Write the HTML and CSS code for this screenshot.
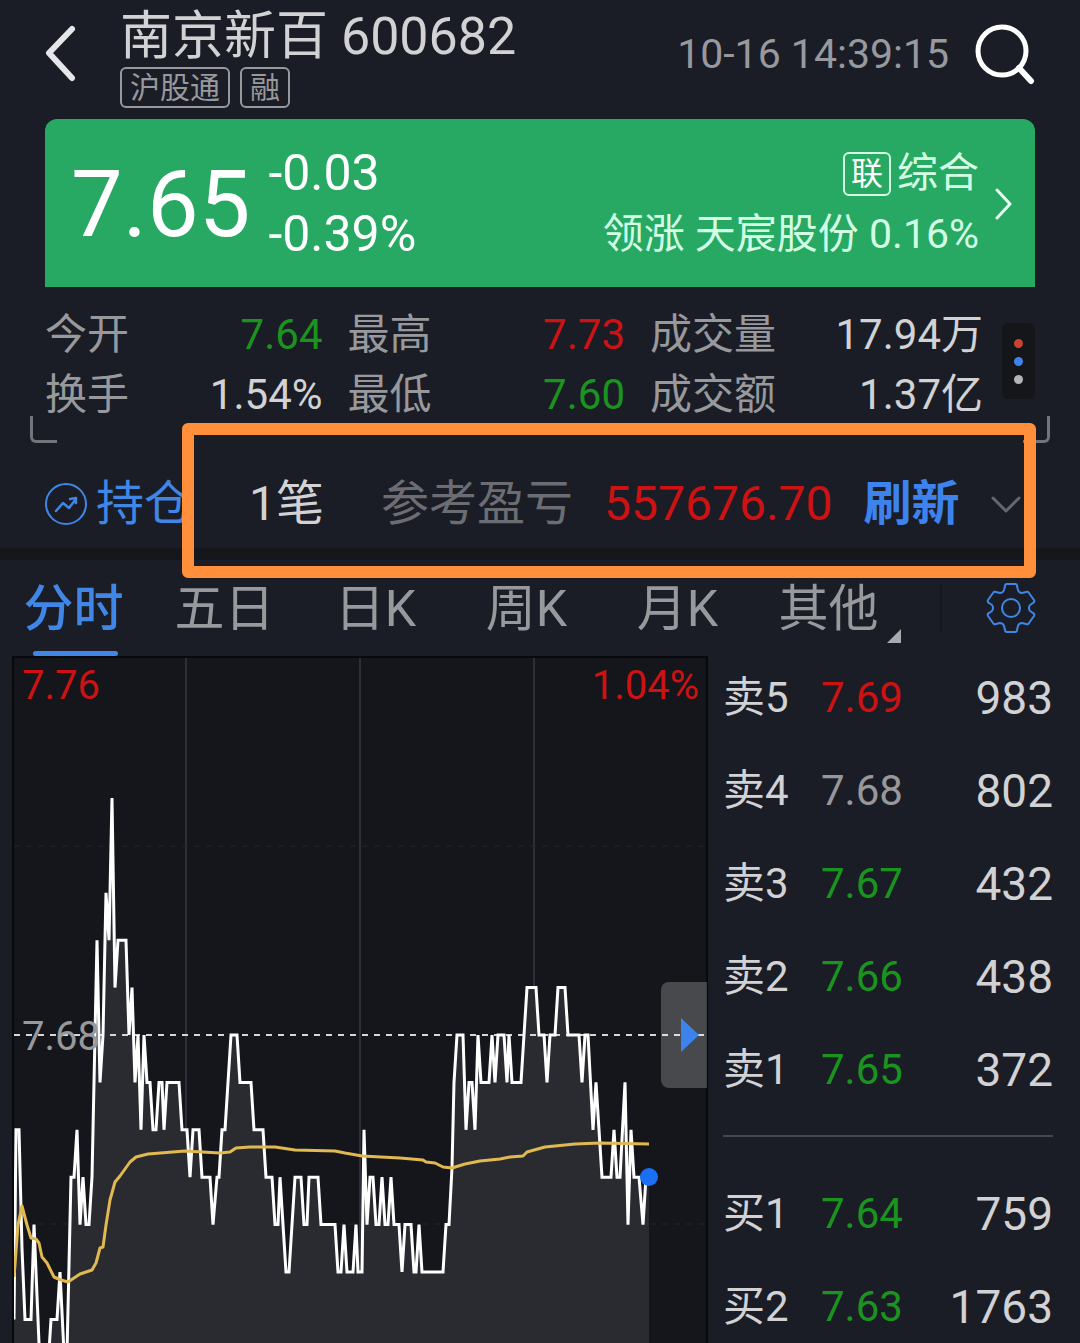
FILE: index.html
```html
<!DOCTYPE html>
<html lang="zh-CN">
<head>
  <meta charset="UTF-8" />
  <meta name="viewport" content="width=device-width, initial-scale=1.0"/>
  <title>南京新百 600682</title>
  <link rel="stylesheet" href="styles.css">
</head>
<body>
  <header class="topbar">
    <button class="icon-btn back" type="button" aria-label="返回">
      <svg width="32" height="60" viewBox="0 0 32 60"><path d="M27 5 4 29 27 54" fill="none" stroke="#e6e6ea" stroke-width="6" stroke-linecap="round" stroke-linejoin="round"/></svg>
    </button>
    <div class="stock">
      <h1>南京新百 <span>600682</span></h1>
      <div class="tags"><span class="tag">沪股通</span><span class="tag">融</span></div>
    </div>
    <time class="clock">10-16 14:39:15</time>
    <button class="icon-btn" type="button" aria-label="搜索">
      <svg width="60" height="62" viewBox="0 0 60 62" fill="none" stroke="#fff" stroke-linecap="round"><circle cx="27" cy="28" r="24" stroke-width="5"/><path d="M44 45 56 58" stroke-width="6"/></svg>
    </button>
  </header>

  <section class="quote">
    <strong class="price">7.65</strong>
    <div class="change">
      <span>-0.03</span>
      <span>-0.39%</span>
    </div>
    <a class="sector" href="#sector">
      <span class="sector-text">
        <span class="sector-name"><b>联</b>综合</span>
        <span>领涨 天宸股份 0.16%</span>
      </span>
      <svg width="18" height="32" viewBox="0 0 18 32"><path d="M2 2 15 16 2 30" fill="none" stroke="#e9fff2" stroke-width="3" stroke-linecap="round" stroke-linejoin="round"/></svg>
    </a>
  </section>

  <section class="stats">
    <dl class="stats-grid">
      <div><dt>今开</dt><dd class="down">7.64</dd></div>
      <div><dt>最高</dt><dd class="up">7.73</dd></div>
      <div><dt>成交量</dt><dd>17.94万</dd></div>
      <div><dt>换手</dt><dd>1.54%</dd></div>
      <div><dt>最低</dt><dd class="down">7.60</dd></div>
      <div><dt>成交额</dt><dd>1.37亿</dd></div>
    </dl>
    <button class="more" type="button" aria-label="更多"><i class="dot-red"></i><i class="dot-blue"></i><i class="dot-gray"></i></button>
    <span class="corner corner-left"></span>
    <span class="corner corner-right"></span>
  </section>

  <section class="holding">
    <a class="holding-link" href="#holding">
      <svg width="42" height="42" viewBox="0 0 42 42" fill="none" stroke="#3f86e6" stroke-width="2" stroke-linecap="round" stroke-linejoin="round"><circle cx="21" cy="21" r="20"/><path d="M11 28 18 20 24 25 31 16M25 16 31 15 31 20" stroke-width="2.5"/></svg>
      持仓
    </a>
    <span class="count">1笔</span>
    <div class="profit">
      <span class="profit-label">参考盈亏</span>
      <span class="up">557676.70</span>
      <button class="refresh" type="button">刷新</button>
      <button class="icon-btn" type="button" aria-label="展开">
        <svg width="30" height="18" viewBox="0 0 30 18"><path d="M2 3 15 16 28 3" fill="none" stroke="#66676d" stroke-width="3" stroke-linecap="round" stroke-linejoin="round"/></svg>
      </button>
    </div>
    <span class="highlight"></span>
  </section>

  <nav class="tabs">
    <div class="tab-list">
      <a class="active" href="#time">分时</a>
      <a href="#5d">五日</a>
      <a href="#day">日K</a>
      <a href="#week">周K</a>
      <a href="#month">月K</a>
      <a class="others" href="#others">其他</a>
    </div>
    <div class="tab-tools">
      <button class="icon-btn" type="button" aria-label="设置">
        <svg width="50" height="50" viewBox="-25 -25 50 50" fill="none" stroke="#3f86e6" stroke-width="2" stroke-linejoin="round"><path d="M-4-24H4Q6-24 6-22L7-18Q8-15 11-15L15-16Q17-17 18-15L23-8Q24-6 22-5L19-3Q17 0 19 3L22 5Q24 6 23 8L18 15Q17 17 15 16L11 15Q8 15 7 18L6 22Q6 24 4 24H-4Q-6 24-6 22L-7 18Q-8 15-11 15L-15 16Q-17 17-18 15L-23 8Q-24 6-22 5L-19 3Q-17 0-19-3L-22-5Q-24-6-23-8L-18-15Q-17-17-15-16L-11-15Q-8-15-7-18L-6-22Q-6-24-4-24Z"/><circle r="9"/></svg>
      </button>
    </div>
  </nav>

  <main class="market">
    <div class="chart">
      <svg viewBox="12 656 696 687">
        <rect x="12" y="656" width="696" height="687" fill="#15161b"/>
        <path d="M186 658V1343M360 658V1343M534 658V1343" stroke="#2d2e37" stroke-width="2"/>
        <path d="M14 846H704M14 1224H704" stroke="#232429" stroke-dasharray="6 6"/>
        <path id="area" fill="#2a2b30"/>
        <path d="M14 1035H704" stroke="#d4d5d8" stroke-width="2" stroke-dasharray="6 6"/>
        <path id="line" fill="none" stroke="#fff" stroke-width="3"/>
        <path id="avg" fill="none" stroke="#e0b951" stroke-width="3" stroke-linejoin="round"/>
        <circle cx="649" cy="1177" r="9" fill="#1a70f5"/>
        <path d="M13 1343V657H707V1343" fill="none" stroke="#08090c" stroke-width="2"/>
      </svg>
      <span class="axis axis-high up">7.76</span>
      <span class="axis axis-percent up">1.04%</span>
      <span class="axis axis-base">7.68</span>
      <button class="drawer" type="button" aria-label="展开盘口"><svg width="18" height="34" viewBox="0 0 18 34"><path d="M0 0 18 17 0 34Z" fill="#3d83ee"/></svg></button>
    </div>

    <div class="book">
      <table class="sell">
        <tr><th>卖5</th><td class="up">7.69</td><td>983</td></tr>
        <tr><th>卖4</th><td class="flat">7.68</td><td>802</td></tr>
        <tr><th>卖3</th><td class="down">7.67</td><td>432</td></tr>
        <tr><th>卖2</th><td class="down">7.66</td><td>438</td></tr>
        <tr><th>卖1</th><td class="down">7.65</td><td>372</td></tr>
      </table>
      <table class="buy">
        <tr><th>买1</th><td class="down">7.64</td><td>759</td></tr>
        <tr><th>买2</th><td class="down">7.63</td><td>1763</td></tr>
      </table>
    </div>
  </main>

  <script src="chart.js"></script>
</body>
</html>
```

FILE: chart.js
```js
// [x, price in cents]
const prices = [
  [14, 762], [16, 766], [19, 766], [22, 763.5], [25, 762], [31, 762], [34, 764], [40, 761],
  [48, 761], [51, 762], [57, 762], [60, 763], [64, 761.3], [67, 761.3], [71, 765], [74, 765],
  [77, 766], [80, 764], [83, 765], [86, 764], [89, 764], [92, 765], [95, 768], [97, 770],
  [100, 767], [103, 768], [106, 771], [109, 770], [112, 773], [115, 769], [118, 770], [126, 770],
  [129, 768], [132, 769], [135, 767], [138, 768], [141, 766], [144, 768], [147, 767], [150, 767],
  [153, 766], [156, 766], [159, 767], [162, 767], [164, 766], [167, 767], [179, 767], [182, 766],
  [187, 766], [190, 765], [193, 766], [199, 766], [202, 765], [210, 765], [213, 764], [217, 765],
  [219, 765], [222, 766], [225, 766], [231, 768], [237, 768], [240, 767], [251, 767], [254, 766],
  [263, 766], [266, 765], [272, 765], [275, 764], [278, 764], [280, 765], [286, 763], [289, 763],
  [295, 765], [301, 765], [304, 764], [307, 764], [309, 765], [318, 765], [321, 764], [335, 764],
  [338, 763], [341, 763], [344, 764], [347, 763], [353, 763], [356, 764], [358, 763], [362, 763],
  [364, 766], [367, 764], [370, 765], [373, 765], [376, 764], [379, 764], [382, 765], [385, 764],
  [388, 764], [391, 765], [394, 764], [399, 764], [402, 763], [405, 764], [411, 764], [414, 763],
  [416, 763], [419, 764], [422, 763], [443, 763], [446, 764], [449, 764], [452, 765.2], [454, 767],
  [457, 768], [463, 768], [466, 766], [469, 767], [472, 767], [475, 766], [478, 768], [481, 767],
  [489, 767], [492, 768], [495, 767], [498, 768], [504, 768], [507, 767], [509, 768], [512, 767],
  [521, 767], [524, 768], [527, 769], [536, 769], [539, 768], [544, 768], [547, 767], [550, 768],
  [555, 768], [558, 769], [565, 769], [568, 768], [579, 768], [582, 767], [585, 768], [588, 768],
  [593, 766], [596, 767], [602, 765], [611, 765], [614, 766], [617, 765], [620, 765], [625, 767],
  [628, 764], [631, 766], [634, 765], [639, 765], [643, 764], [646, 765], [649, 765]
];

const average = [
  [14, 1277], [18, 1225], [22, 1206], [27, 1225], [31, 1238], [36, 1239], [39, 1243], [42, 1257],
  [47, 1263], [54, 1277], [61, 1280], [68, 1282], [74, 1278], [80, 1274], [92, 1270], [96, 1263],
  [100, 1248], [103, 1247], [106, 1225], [110, 1200], [115, 1182], [120, 1176], [130, 1162],
  [136, 1157], [148, 1154], [185, 1151], [220, 1153], [230, 1152], [236, 1148], [250, 1147],
  [275, 1147], [295, 1150], [335, 1151], [345, 1153], [362, 1156], [400, 1158], [423, 1160],
  [426, 1162], [435, 1163], [443, 1167], [452, 1168], [465, 1164], [480, 1161], [500, 1159],
  [510, 1157], [523, 1156], [527, 1152], [545, 1147], [575, 1144], [600, 1143], [649, 1144]
];

const toY = (p) => 1035 + (768 - p) * 47.4;
const points = prices.map(([x, p]) => `${x} ${toY(p)}`).join("L");

document.getElementById("line").setAttribute("d", "M" + points);
document.getElementById("area").setAttribute("d", "M14 1343L" + points + "V1343Z");
document.getElementById("avg").setAttribute("d", "M" + average.map((p) => p.join(" ")).join("L"));
```

FILE: styles.css
```css
* {
  box-sizing: border-box;
}

body {
  margin: 0;
  background-color: #1b1d26;
  color: #d2d2d4;
  font-family: Roboto, "Noto Sans CJK SC", sans-serif;
  font-size: 42px;
}

h1, dl, dd {
  margin: 0;
}

a {
  color: inherit;
  text-decoration: none;
}

button {
  padding: 0;
  border: none;
  background: none;
  color: inherit;
  font: inherit;
  cursor: pointer;
}

svg {
  display: block;
}

.up {
  color: #cc1212;
}

.down {
  color: #1a941f;
}

.flat {
  color: #98989c;
}

/* header */
.topbar {
  display: flex;
  align-items: center;
  padding: 0 45px 11px;
}

.back {
  margin-right: 43px;
}

.stock {
  flex: 1;
  padding-top: 11px;
}

.stock h1 {
  font-size: 52px;
  font-weight: 400;
  line-height: 52px;
  white-space: nowrap;
}

.tags {
  display: flex;
  gap: 10px;
  margin-top: 4px;
}

.tag {
  padding: 1px 8px 0;
  border: 2px solid #98999d;
  border-radius: 6px;
  color: #98999d;
  font-size: 30px;
  line-height: 36px;
}

.clock {
  margin-right: 26px;
  color: #98999d;
  font-size: 41px;
}

/* price card */
.quote {
  display: flex;
  align-items: center;
  height: 168px;
  margin: 0 45px;
  padding: 2px 22px 0 26px;
  border-radius: 12px 12px 0 0;
  background-color: #27a963;
  color: #fff;
}

.price {
  font-size: 92px;
  font-weight: 400;
}

.change {
  display: flex;
  flex-direction: column;
  margin-left: 18px;
  font-size: 50px;
  line-height: 61px;
}

.sector {
  display: flex;
  align-items: center;
  gap: 16px;
  margin-left: auto;
  color: #d3ffe5;
  font-size: 41px;
  line-height: 61px;
}

.sector-text {
  display: flex;
  flex-direction: column;
  align-items: flex-end;
}

.sector-name {
  display: flex;
  align-items: center;
  gap: 6px;
}

.sector-name b {
  padding: 0 6px;
  border: 2px solid #d3ffe5;
  border-radius: 6px;
  color: #fff;
  font-size: 32px;
  font-weight: 400;
  line-height: 40px;
}

/* stats */
.stats {
  position: relative;
  display: flex;
  align-items: flex-start;
  gap: 19px;
  margin-top: 18px;
  padding: 0 45px;
}

.stats-grid {
  flex: 1;
  display: grid;
  grid-template-columns: 5fr 5fr 6fr;
  column-gap: 25px;
  line-height: 60px;
}

.stats-grid div {
  display: flex;
  justify-content: space-between;
}

.stats-grid dt {
  color: #98999d;
}

.more {
  display: flex;
  flex-direction: column;
  align-items: center;
  justify-content: center;
  gap: 9px;
  width: 33px;
  height: 76px;
  margin-top: 18px;
  border-radius: 6px;
  background-color: #15161a;
}

.more i {
  width: 9px;
  height: 9px;
  border-radius: 50%;
}

.dot-red {
  background-color: #c9432f;
}

.dot-blue {
  background-color: #3d83ee;
}

.dot-gray {
  background-color: #b4b4b8;
}

.corner {
  position: absolute;
  bottom: -18px;
  width: 27px;
  height: 27px;
  border-bottom: 3px solid #737479;
}

.corner-left {
  left: 30px;
  border-left: 3px solid #737479;
  border-bottom-left-radius: 6px;
}

.corner-right {
  right: 30px;
  border-right: 3px solid #737479;
  border-bottom-right-radius: 6px;
}

/* holding */
.holding {
  position: relative;
  display: flex;
  align-items: center;
  gap: 57px;
  padding: 35px 45px 0;
  border-bottom: 12px solid #15171b;
  font-size: 48px;
  line-height: 88px;
  white-space: nowrap;
}

.holding-link {
  display: flex;
  align-items: center;
  gap: 9px;
  color: #3f86e6;
}

.profit {
  display: flex;
  align-items: center;
  gap: 31px;
}

.profit-label {
  color: #6c6d72;
}

.refresh {
  color: #3d83ee;
  font-weight: 700;
}

.highlight {
  position: absolute;
  top: -2px;
  bottom: -30px;
  left: 182px;
  right: 44px;
  border: 12px solid #ff8f3b;
  border-radius: 6px;
  pointer-events: none;
}

/* tabs */
.tabs {
  display: flex;
  height: 96px;
  font-size: 50px;
  line-height: 98px;
}

.tab-list {
  flex: 1;
  display: grid;
  grid-template-columns: repeat(6, 1fr);
  color: #98999d;
  text-align: center;
}

.tab-list a {
  position: relative;
  height: 96px;
  padding-right: 4px;
}

.tab-list .active {
  color: #3f86e6;
  font-weight: 500;
}

.tab-list .active::after {
  content: "";
  position: absolute;
  left: 33px;
  right: 33px;
  bottom: 0;
  height: 5px;
  border-radius: 3px;
  background-color: #3f86e6;
}

.others::after {
  content: "";
  position: absolute;
  right: 5px;
  bottom: 13px;
  border-bottom: 14px solid #a9aaae;
  border-left: 14px solid transparent;
}

.tab-tools {
  display: flex;
  align-items: center;
  justify-content: flex-end;
  width: 140px;
  margin: 24px 0 24px 34px;
  padding-right: 44px;
  border-left: 2px solid #15171c;
}

/* chart and order book */
.market {
  display: flex;
  align-items: flex-start;
  padding-left: 12px;
}

.chart {
  position: relative;
  flex: 1;
}

.axis {
  position: absolute;
  font-size: 40px;
  line-height: 40px;
}

.axis-high {
  top: 10px;
  left: 10px;
}

.axis-percent {
  top: 10px;
  right: 9px;
}

.axis-base {
  top: 361px;
  left: 10px;
  color: #98999d;
}

.drawer {
  position: absolute;
  top: 326px;
  right: 1px;
  width: 46px;
  height: 106px;
  padding-left: 20px;
  border-radius: 8px 0 0 8px;
  background-color: rgba(255, 255, 255, 0.22);
}

.book {
  width: 372px;
  padding: 0 27px 0 15px;
}

.book table {
  width: 100%;
  border-collapse: collapse;
  table-layout: fixed;
  line-height: 60px;
}

.book th,
.book td {
  padding: 12px 0 21px;
  font-weight: 400;
  text-align: left;
}

.book th {
  width: 98px;
}

.book td:last-child {
  font-size: 46px;
  text-align: right;
}

.sell {
  margin-bottom: 14px;
}

.buy {
  border-top: 2px solid #464752;
}

.buy tr:first-child > * {
  padding-top: 47px;
}

.buy tr:last-child > * {
  padding-bottom: 0;
}
```
